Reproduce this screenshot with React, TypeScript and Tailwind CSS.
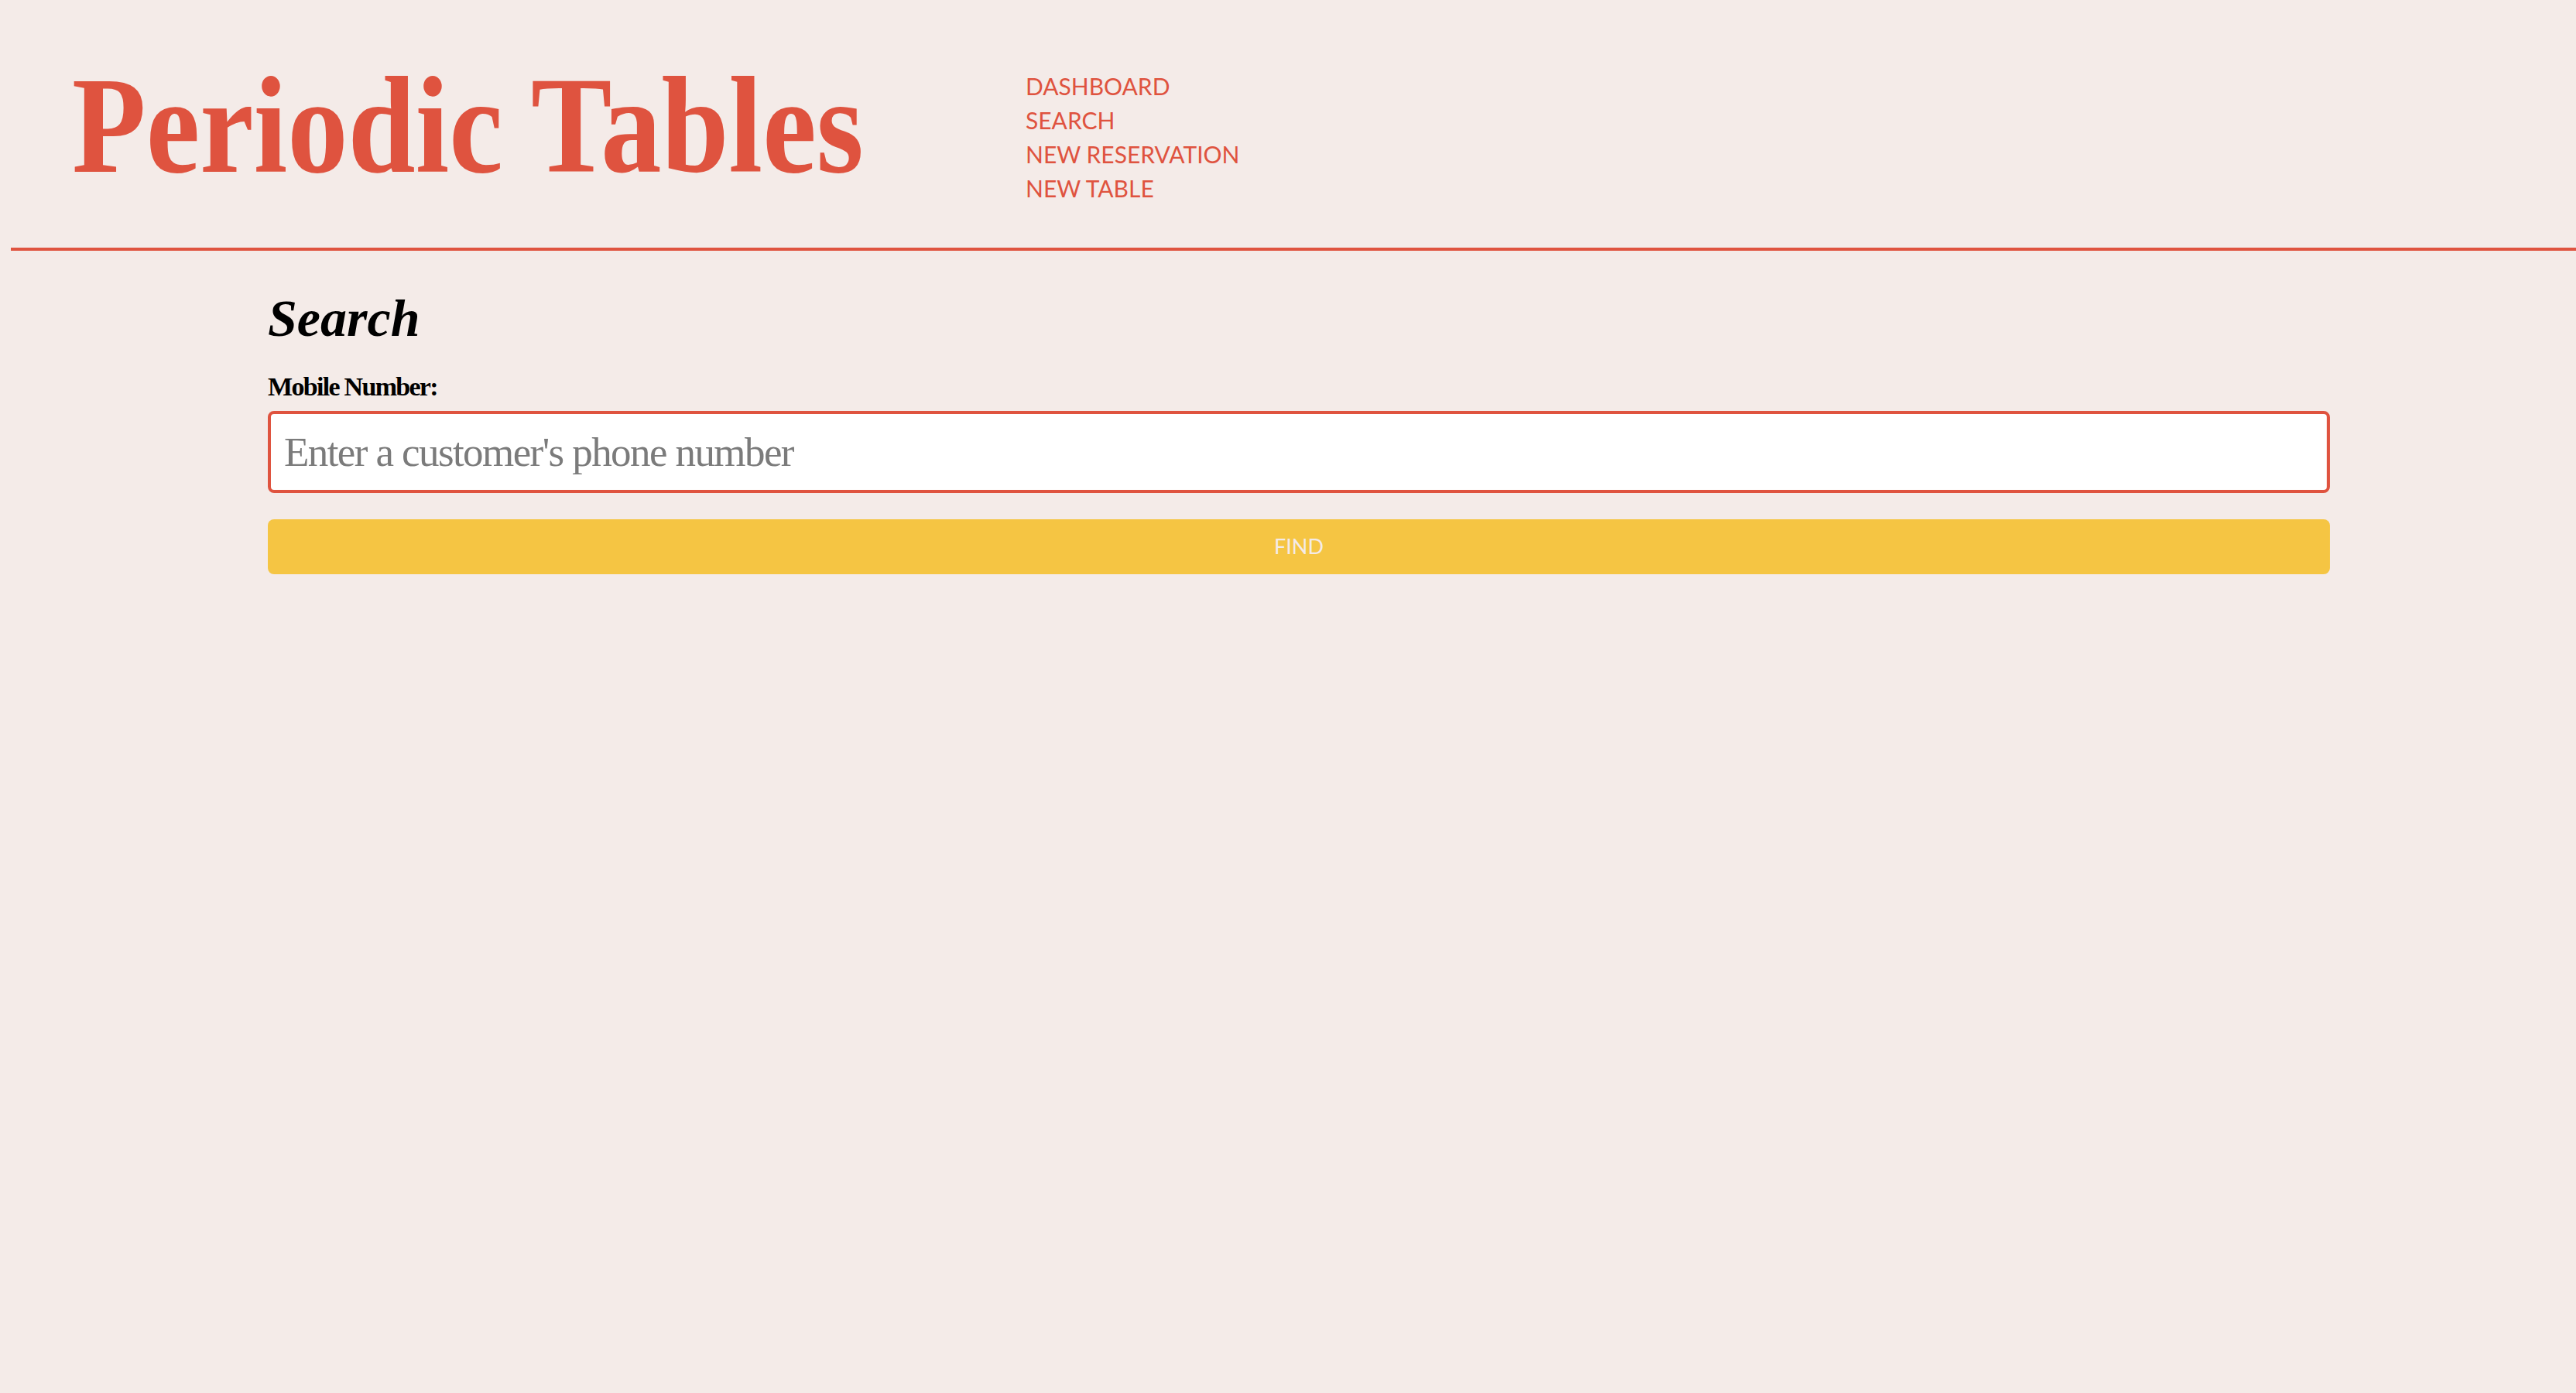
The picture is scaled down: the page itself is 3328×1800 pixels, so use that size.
import { useState } from "react";

const navItems = ["DASHBOARD", "SEARCH", "NEW RESERVATION", "NEW TABLE"];

const App = () => {
  const [mobile, setMobile] = useState("");

  return (
    <div className="min-h-screen w-full bg-[#f4ebe8]">
      <header className="flex h-[320px] items-start pl-[93px] pt-[74px]">
        <div className="w-[1232px] shrink-0">
          <h1 className="inline-block origin-left scale-x-[0.885] whitespace-nowrap font-['Liberation_Serif',serif] text-[177px] font-bold leading-none text-[#df533f]">
            Periodic Tables
          </h1>
        </div>
        <nav className="mt-[15px] flex flex-col font-['Lato',sans-serif] text-[30px] leading-[44px] text-[#df533f]">
          {navItems.map((item) => (
            <a key={item} href="#" className="whitespace-nowrap">
              {item}
            </a>
          ))}
        </nav>
      </header>
      <div className="ml-[14px] h-[4px] bg-[#df533f]" />
      <main className="pl-[346px] pr-[318px] pt-[53px]">
        <h2 className="font-['Liberation_Serif',serif] text-[68px] font-bold italic leading-none text-black">
          Search
        </h2>
        <form
          className="mt-[38px] flex flex-col"
          onSubmit={(e) => e.preventDefault()}
        >
          <label
            htmlFor="mobile_number"
            className="font-['Liberation_Serif',serif] text-[34px] font-bold leading-none tracking-[-0.05em] text-black"
          >
            Mobile Number:
          </label>
          <input
            id="mobile_number"
            name="mobile_number"
            type="tel"
            value={mobile}
            onChange={(e) => setMobile(e.target.value)}
            placeholder="Enter a customer's phone number"
            className="mt-[14px] h-[106px] w-full rounded-[8px] border-4 border-[#df533f] bg-white px-[17px] font-['Liberation_Serif',serif] text-[53px] tracking-[-0.03em] text-black outline-none placeholder:text-[#7b7b7b]"
          />
          <button
            type="submit"
            className="mt-[34px] h-[71px] w-full rounded-[8px] bg-[#f5c543] font-['Lato',sans-serif] text-[27px] text-[#f4ebe8]"
          >
            FIND
          </button>
        </form>
      </main>
    </div>
  );
};

export default App;
